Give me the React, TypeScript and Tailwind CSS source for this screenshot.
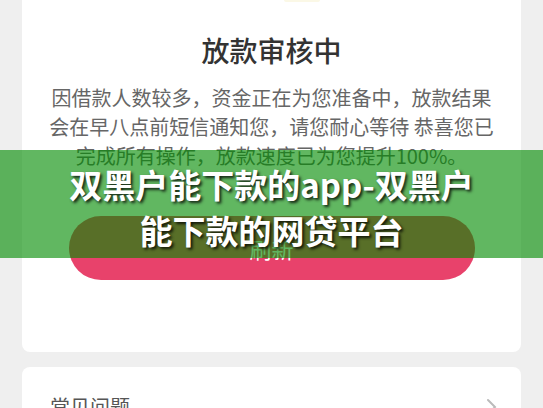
import React from "react";

const FONT = "font-['Noto_Sans_CJK_SC','Noto_Sans',sans-serif]";

const LoanStatus = () => {
  return (
    <div className="mx-[22px] flex flex-col items-center rounded-b-[8px] bg-white px-[28px] pb-[72px]">
      <div className="h-[2px] w-[36px] translate-x-[30px] rounded-b-full bg-[#fbf8e6]" />
      <h3 className="mt-[28px] text-[28px] leading-[40px] font-medium text-[#333333]">
        放款审核中
      </h3>
      <p className="mt-[13px] text-center text-[20px] leading-[29px] text-[#666666]">
        <span className="block whitespace-nowrap">
          因借款人数较多，资金正在为您准备中，放款结果
        </span>
        <span className="block whitespace-nowrap">
          会在早八点前短信通知您，请您耐心等待 恭喜您已
        </span>
        <span className="block whitespace-nowrap">
          完成所有操作，放款速度已为您提升100%。
        </span>
      </p>
      <button className="mt-[46px] h-[64px] w-[406px] rounded-full bg-[#e8426b] text-[22px] text-white">
        刷新
      </button>
    </div>
  );
};

const App = () => {
  return (
    <div
      className={`relative h-[408px] w-full overflow-hidden bg-[#efefef] ${FONT}`}
    >
      <LoanStatus />

      <div className="mx-[22px] mt-[15px] flex items-center justify-between rounded-t-[8px] bg-white pl-[28px] pr-[24px] pt-[26px]">
        <span className="text-[20px] leading-[28px] text-[#555555]">常见问题</span>
        <svg
          width="12"
          height="18"
          viewBox="0 0 12 18"
          fill="none"
          stroke="#bbbbbb"
          strokeWidth="2"
          strokeLinecap="round"
        >
          <path d="M3 2l7 7-7 7" />
        </svg>
      </div>

      {/* title banner over the page */}
      <div className="absolute left-0 right-0 top-[150px] flex h-[108px] flex-col items-center justify-center bg-[rgba(0,138,0,0.62)] pt-[5px] text-[33px] leading-[46px] font-bold text-white [text-shadow:2px_2px_3px_rgba(0,0,0,0.8)]">
        <span className="block whitespace-nowrap">双黑户能下款的app-双黑户</span>
        <span className="block whitespace-nowrap">能下款的网贷平台</span>
      </div>
    </div>
  );
};

export default App;
